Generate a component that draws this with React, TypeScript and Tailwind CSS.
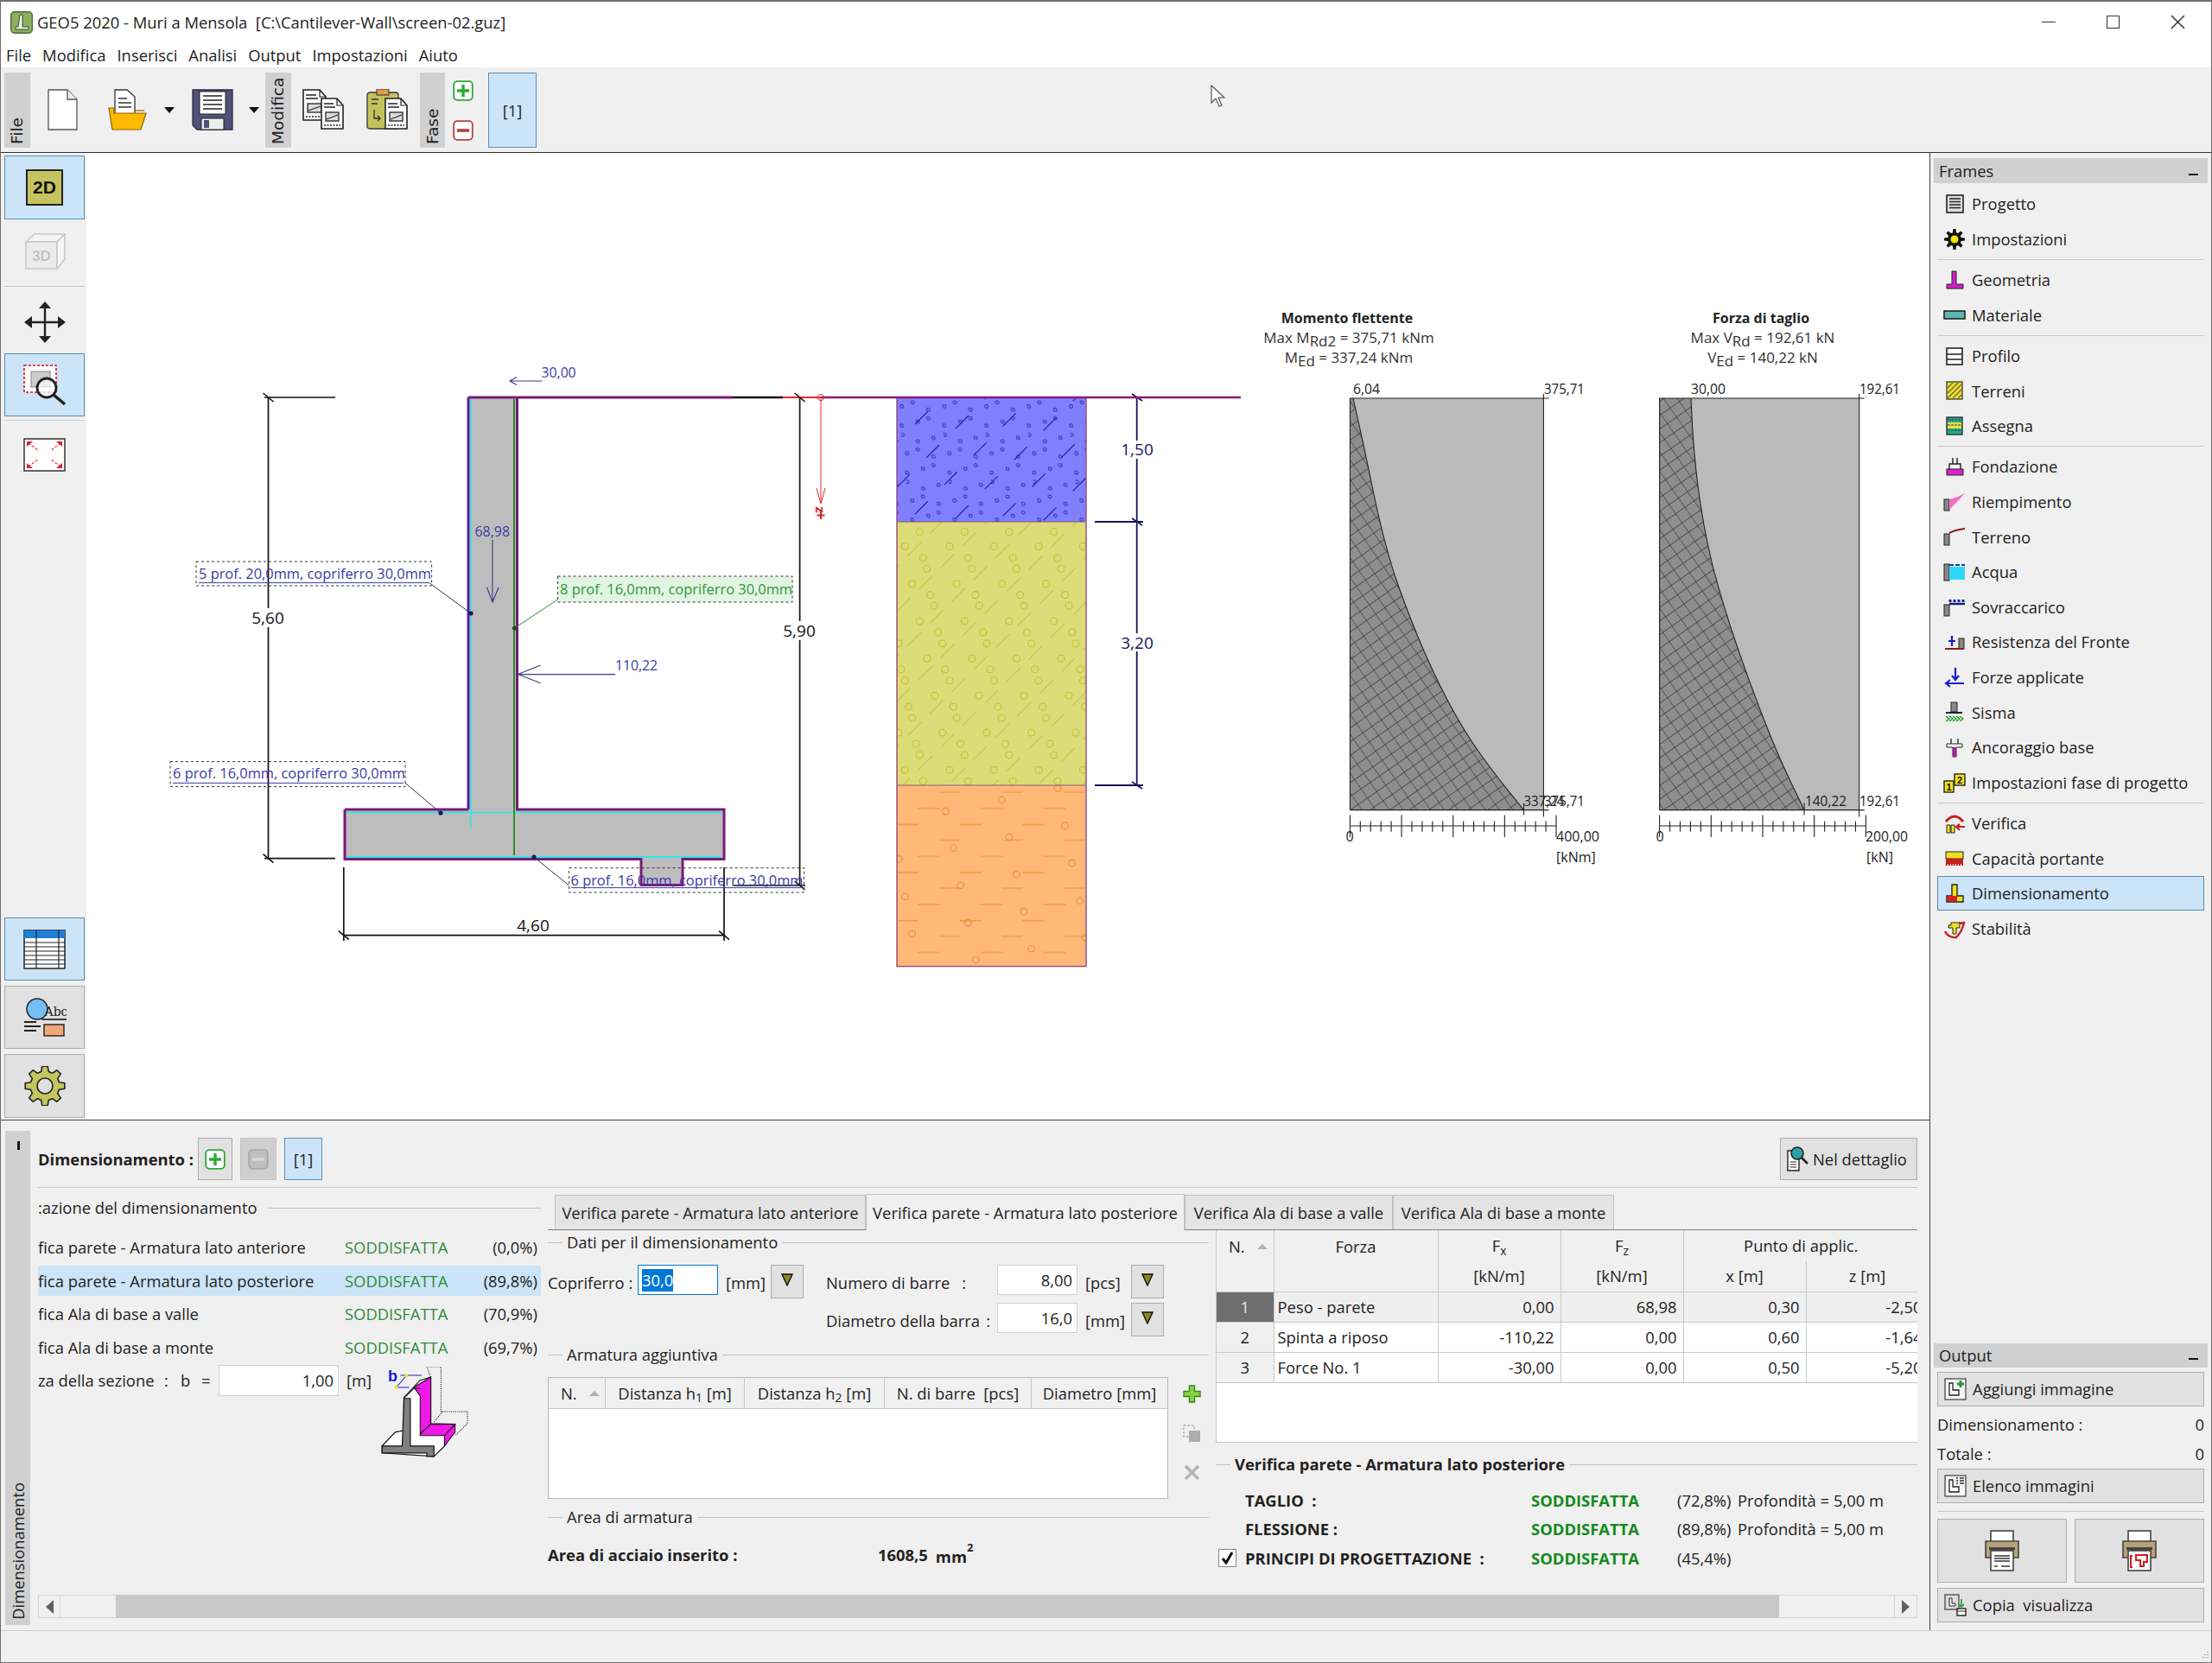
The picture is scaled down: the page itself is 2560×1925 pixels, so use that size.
import type { ReactNode } from 'react'

const btn = 'bg-[#e1e1e1] border border-[#adadad]'
const selBtn = 'bg-[#cce4f7] border border-[#5a8fb8]'
const GREEN = '#2e8b3a'
const BLUE_TXT = '#3b3ba6'
const NAVY = '#14145a'

function gearPath(cx: number, cy: number, r1: number, r2: number, n: number) {
  const pts: string[] = []
  for (let i = 0; i < n; i++) {
    const a = (i / n) * Math.PI * 2
    const s = (Math.PI / n) * 0.5
    const p = [
      [r1, a - s * 1.3],
      [r2, a - s * 0.7],
      [r2, a + s * 0.7],
      [r1, a + s * 1.3],
    ]
    p.forEach(([r, t]) => pts.push(`${(cx + r * Math.cos(t)).toFixed(1)},${(cy + r * Math.sin(t)).toFixed(1)}`))
  }
  return 'M' + pts.join('L') + 'Z'
}

function smooth(p: number[][]) {
  let d = `M${p[0][0]} ${p[0][1]}`
  for (let i = 1; i < p.length - 1; i++) {
    const mx = (p[i][0] + p[i + 1][0]) / 2
    const my = (p[i][1] + p[i + 1][1]) / 2
    d += `Q${p[i][0]} ${p[i][1]} ${mx} ${my}`
  }
  const l = p[p.length - 1]
  return d + `L${l[0]} ${l[1]}`
}

/* ---------- toolbar icons ---------- */

function MiniDoc({ x, y, w = 26, h = 40, red }: { x: number; y: number; w?: number; h?: number; red?: boolean }) {
  return (
    <g transform={`translate(${x} ${y})`}>
      <path d={`M1 1H${w - 8}L${w - 1} 9V${h - 1}H1Z`} fill="#fff" stroke="#222" strokeWidth="1.6" />
      <path d={`M${w - 8} 1V9H${w - 1}`} fill="none" stroke="#222" strokeWidth="1.2" />
      <path d={`M4 7H${w - 12}M4 11H${w - 10}`} stroke="#222" strokeWidth="1.4" />
      <rect x="6" y="17" width={w - 12} height={h - 27} fill="#ddd" stroke="#222" strokeWidth="1.3" />
      <path d={`M7 ${h - 12}L${w - 7} 20`} stroke={red ? '#c00' : '#222'} strokeWidth="1.2" />
      <path d={`M4 ${h - 5}H${w - 4}`} stroke="#222" strokeWidth="1.6" strokeDasharray="2 1.5" />
    </g>
  )
}

function NewIcon() {
  return (
    <svg width="35" height="48" viewBox="0 0 35 48">
      <path d="M1 1H23L34 12V47H1Z" fill="#fff" stroke="#555" strokeWidth="1.3" />
      <path d="M23 1V12H34" fill="#f0f0f0" stroke="#555" strokeWidth="1.3" />
    </svg>
  )
}

function OpenIcon() {
  return (
    <svg width="45" height="48" viewBox="0 0 45 48">
      <path d="M8 1H22L31 9V30H8Z" fill="#fff" stroke="#333" strokeWidth="1.3" />
      <path d="M12 11H22M12 16H27M12 21H27" stroke="#333" strokeWidth="1.4" />
      <path d="M1 22H7V28H44L38 47H5Z" fill="#ffb900" stroke="#8a6400" strokeWidth="1.2" />
      <path d="M30 25H42" stroke="#8a6400" strokeWidth="1.2" />
    </svg>
  )
}

function SaveIcon() {
  return (
    <svg width="48" height="48" viewBox="0 0 48 48">
      <path d="M1 1H47V47H6L1 42Z" fill="#51517a" stroke="#2c2c44" strokeWidth="1.3" />
      <rect x="9" y="3" width="30" height="26" fill="#fff" stroke="#222" />
      <path d="M13 8H35M13 13H35M13 18H35M13 23H35" stroke="#222" strokeWidth="1.5" />
      <rect x="11" y="34" width="26" height="13" fill="#eee" stroke="#222" />
      <rect x="14" y="36" width="6" height="9" fill="#51517a" />
    </svg>
  )
}

function CopyIcon() {
  return (
    <svg width="49" height="48" viewBox="0 0 49 48">
      <MiniDoc x={0} y={0} w={28} h={37} />
      <MiniDoc x={21} y={10} w={27} h={37} />
    </svg>
  )
}

function PasteIcon() {
  return (
    <svg width="49" height="48" viewBox="0 0 49 48">
      <rect x="1" y="4" width="36" height="42" rx="3" fill="#c4c25c" stroke="#333" strokeWidth="1.3" />
      <rect x="12" y="0" width="14" height="7" fill="#e09a50" stroke="#333" />
      <path d="M6 12H14M6 17H13M9 24V34H16M13 31L16 34L13 37" fill="none" stroke="#333" strokeWidth="1.3" />
      <MiniDoc x={21} y={10} w={27} h={37} />
    </svg>
  )
}

function Arrow({ className = '' }: { className?: string }) {
  return <span className={`w-0 h-0 border-x-[6px] border-x-transparent border-t-[7px] border-t-[#111] ${className}`} />
}

function PlusIcon({ gray }: { gray?: boolean }) {
  return (
    <svg width="24" height="24" viewBox="0 0 24 24">
      <rect x="1.2" y="1.2" width="21.6" height="21.6" rx="4" fill="#fff" stroke={gray ? '#aaa' : '#2fa83a'} strokeWidth="1.8" />
      <path d="M12 5V19M5 12H19" stroke={gray ? '#aaa' : '#2fa83a'} strokeWidth="3.4" />
    </svg>
  )
}

function MinusIcon({ gray }: { gray?: boolean }) {
  const c = gray ? '#a9a9a9' : '#b84040'
  return (
    <svg width="24" height="24" viewBox="0 0 24 24">
      <rect x="1.2" y="1.2" width="21.6" height="21.6" rx="4" fill={gray ? '#bfbfbf' : '#fff'} stroke={c} strokeWidth="1.8" />
      <path d="M5 12H19" stroke={gray ? '#d8d8d8' : c} strokeWidth="3.6" />
    </svg>
  )
}

function VertTab({ label, w }: { label: string; w: string }) {
  return (
    <div className={`${w} h-[87px] bg-[#d0d0d0] flex items-center justify-start [writing-mode:vertical-rl] rotate-180 font-['DejaVu_Sans',sans-serif] text-[18.5px] pt-[4px]`}>
      {label}
    </div>
  )
}

/* ---------- left tools ---------- */

function Icon2D() {
  return (
    <div className="w-[43px] h-[42px] bg-[#c6c45e] border-2 border-[#222] flex items-center justify-center font-['Liberation_Sans',sans-serif] font-bold text-[21px] text-[#111]">
      2D
    </div>
  )
}

function Icon3D() {
  return (
    <svg width="48" height="44" viewBox="0 0 48 44">
      <path d="M2 12L12 3H47L38 12Z" fill="#f4f4f4" stroke="#c8c8c8" strokeWidth="1.5" />
      <path d="M2 12H38V43H2Z" fill="#ececec" stroke="#c8c8c8" strokeWidth="1.5" />
      <path d="M38 12L47 3V32L38 43Z" fill="#f6f6f6" stroke="#c8c8c8" strokeWidth="1.5" />
      <text x="20" y="34" textAnchor="middle" fontSize="17" fontWeight="700" fill="#c4c4c4" fontFamily="Liberation Sans">3D</text>
    </svg>
  )
}

function MoveIcon() {
  return (
    <svg width="48" height="48" viewBox="0 0 48 48">
      <path d="M24 3V45M3 24H45" stroke="#222" strokeWidth="2.4" />
      <path d="M24 0L31 8H17ZM24 48L31 40H17ZM0 24L9 17V31ZM48 24L39 17V31Z" fill="#222" />
    </svg>
  )
}

function ZoomIcon() {
  return (
    <svg width="50" height="48" viewBox="0 0 50 48">
      <rect x="1" y="1" width="37" height="31" fill="#fff" stroke="#d01818" strokeWidth="1.6" strokeDasharray="3 2" />
      <rect x="9" y="8" width="22" height="18" fill="#ccc" stroke="#888" />
      <circle cx="27" cy="27" r="11" fill="#ffffffb0" stroke="#222" strokeWidth="2.8" />
      <path d="M35 35L48 46" stroke="#222" strokeWidth="3.6" />
    </svg>
  )
}

function FitIcon() {
  return (
    <svg width="49" height="39" viewBox="0 0 49 39">
      <rect x="1" y="1" width="47" height="37" fill="#fff" stroke="#333" strokeWidth="1.5" />
      <path d="M6 6L18 15M43 6L31 15M6 33L18 24M43 33L31 24" stroke="#e33" strokeWidth="1.3" strokeDasharray="3 2" />
      <path d="M4 4H11L4 10ZM45 4H38L45 10ZM4 35H11L4 29ZM45 35H38L45 29Z" fill="#e02020" />
    </svg>
  )
}

function TableIcon() {
  return (
    <svg width="49" height="46" viewBox="0 0 49 46">
      <rect x="1" y="1" width="47" height="44" fill="#fff" stroke="#222" strokeWidth="1.5" />
      <rect x="1" y="1" width="47" height="9" fill="#1f7fd6" />
      <path d="M1 15H48M1 20H48M1 25H48M1 30H48M1 35H48M1 40H48M15 1V45M41 1V45" stroke="#222" strokeWidth="1.2" />
    </svg>
  )
}

function AbcIcon() {
  return (
    <svg width="50" height="46" viewBox="0 0 50 46">
      <circle cx="16" cy="13" r="12" fill="#75bdf5" stroke="#222" strokeWidth="1.5" />
      <text x="38" y="21" textAnchor="middle" fontSize="14" fill="#222" fontFamily="DejaVu Serif">Abc</text>
      <path d="M21 25H50" stroke="#222" strokeWidth="1.7" />
      <path d="M1 28H15M1 33H20M1 38H15" stroke="#222" strokeWidth="1.8" />
      <rect x="24" y="31" width="23" height="13" fill="#f0a878" stroke="#222" strokeWidth="1.4" />
    </svg>
  )
}

function BigGear() {
  return (
    <svg width="50" height="46" viewBox="0 0 50 46">
      <path d={gearPath(25, 23, 17, 23, 8)} fill="#c6c45e" stroke="#222" strokeWidth="1.6" strokeLinejoin="round" />
      <circle cx="25" cy="23" r="9" fill="#e0e0e0" stroke="#222" strokeWidth="1.6" />
    </svg>
  )
}

/* ---------- frame icons ---------- */

const frameIcons: Record<string, ReactNode> = {
  Progetto: (
    <>
      <rect x="4" y="2" width="19" height="20" fill="#ddd" stroke="#222" strokeWidth="1.6" />
      <path d="M7 6H20M7 9.5H20M7 13H20M7 16.5H20" stroke="#222" strokeWidth="1.3" />
    </>
  ),
  Impostazioni: (
    <>
      <path d={gearPath(13, 12, 8, 12, 8)} fill="#111" />
      <circle cx="13" cy="12" r="5" fill="#ffe600" stroke="#111" />
    </>
  ),
  Geometria: <path d="M10 2H15V17H23V22H4V17H10Z" fill="#d020c8" stroke="#222" />,
  Materiale: <rect x="1" y="7" width="24" height="9" fill="#5ab8b0" stroke="#222" strokeWidth="1.6" />,
  Profilo: (
    <>
      <rect x="4" y="3" width="18" height="19" fill="#fff" stroke="#222" strokeWidth="1.6" />
      <path d="M4 10H22M4 16H22" stroke="#222" strokeWidth="1.4" />
    </>
  ),
  Terreni: (
    <>
      <rect x="4" y="2" width="18" height="20" fill="#f0e020" stroke="#444" strokeWidth="1.4" />
      <path d="M5 9L11 3M5 15L17 3M5 21L21 5M11 21L21 11M17 21L21 17" stroke="#665" strokeWidth="1.4" />
    </>
  ),
  Assegna: (
    <>
      <rect x="4" y="2" width="18" height="20" fill="#28a890" stroke="#333" strokeWidth="1.4" />
      <rect x="5" y="8" width="16" height="7" fill="#e8e040" />
      <path d="M5 11H21M5 17H21M5 5H21" stroke="#244" strokeWidth="1.2" strokeDasharray="3 1" />
    </>
  ),
  Fondazione: (
    <>
      <rect x="4" y="15" width="19" height="7" fill="#e020c8" stroke="#222" />
      <path d="M7 15V9H20V15M11 9V2M16 9V2" fill="none" stroke="#222" strokeWidth="1.4" />
    </>
  ),
  Riempimento: (
    <>
      <rect x="1" y="9" width="6" height="13" fill="#888" stroke="#222" />
      <path d="M7 9Q16 7 25 2Q16 12 7 21Z" fill="#f070c8" />
    </>
  ),
  Terreno: (
    <>
      <rect x="1" y="9" width="6" height="13" fill="#888" stroke="#222" />
      <path d="M7 8Q15 4 25 3" fill="none" stroke="#901818" strokeWidth="2" />
    </>
  ),
  Acqua: (
    <>
      <rect x="1" y="3" width="6" height="19" fill="#888" stroke="#222" />
      <rect x="7" y="6" width="18" height="15" fill="#30d8f8" />
      <path d="M7 4H25" stroke="#123a90" strokeWidth="2" strokeDasharray="5 2" />
    </>
  ),
  Sovraccarico: (
    <>
      <rect x="1" y="9" width="6" height="13" fill="#888" stroke="#222" />
      <path d="M7 8H25" stroke="#111a70" strokeWidth="2.4" />
      <path d="M8 6V3M13 6V3M18 6V3M23 6V3" stroke="#1620a0" strokeWidth="3" />
    </>
  ),
  'Resistenza del Fronte': (
    <>
      <rect x="18" y="8" width="6" height="12" fill="#888" stroke="#222" />
      <path d="M2 20H24" stroke="#901818" strokeWidth="2" />
      <path d="M10 5V17M6 11H14" stroke="#1620c0" strokeWidth="2.2" />
    </>
  ),
  'Forze applicate': (
    <>
      <path d="M14 1V13M10 10L14 15L18 10" fill="none" stroke="#1620d0" strokeWidth="2.2" />
      <path d="M3 19H24M8 15L3 19L8 23" fill="none" stroke="#1620d0" strokeWidth="2.2" />
    </>
  ),
  Sisma: (
    <>
      <rect x="9" y="1" width="7" height="11" fill="#888" stroke="#222" />
      <path d="M3 13H22" stroke="#222" strokeWidth="2" />
      <path d="M3 17L7 20L3 23M11 17L15 20L11 23M19 17L23 20L19 23M7 17L11 20L7 23M15 17L19 20L15 23" fill="none" stroke="#18a020" strokeWidth="1.4" />
    </>
  ),
  'Ancoraggio base': (
    <>
      <path d="M4 8H22V12H15V23H11V12H4Z" fill="#fff" stroke="#222" />
      <rect x="11" y="12" width="4" height="11" fill="#a82090" />
      <path d="M9 8V2M17 8V2" stroke="#222" strokeWidth="1.3" />
    </>
  ),
  'Impostazioni fase di progetto': (
    <>
      <rect x="1" y="10" width="11" height="13" fill="#f0e020" stroke="#222" strokeWidth="1.4" />
      <rect x="13" y="2" width="12" height="13" fill="#f0e020" stroke="#222" strokeWidth="1.4" />
      <text x="6.5" y="21" textAnchor="middle" fontSize="11" fontWeight="700" fill="#111" fontFamily="Liberation Sans">1</text>
      <text x="19" y="13" textAnchor="middle" fontSize="11" fontWeight="700" fill="#111" fontFamily="Liberation Sans">2</text>
    </>
  ),
  Verifica: (
    <>
      <path d="M3 10Q13 -2 23 10" fill="none" stroke="#c02020" strokeWidth="3" />
      <path d="M4 14H8V23H4ZM9 14H13V23H9Z" fill="#f0e020" stroke="#222" />
      <path d="M15 16H25M19 13L15 16L19 20" fill="none" stroke="#c02020" strokeWidth="2.2" />
    </>
  ),
  'Capacità portante': (
    <>
      <rect x="3" y="5" width="20" height="8" fill="#f0e020" stroke="#222" />
      <rect x="3" y="13" width="20" height="6" fill="#c82020" />
      <path d="M3 20H23" stroke="#c82020" strokeWidth="2" strokeDasharray="2 1" />
    </>
  ),
  Dimensionamento: (
    <>
      <path d="M10 2H16V15H23V22H4V15H10Z" fill="#f0e020" stroke="#222" strokeWidth="1.4" />
      <rect x="5" y="15" width="11" height="6" fill="#e02020" />
    </>
  ),
  Stabilità: (
    <>
      <path d="M2 15Q6 23 15 22Q22 15 24 5L18 6" fill="none" stroke="#c82020" strokeWidth="2.4" />
      <path d="M9 5H19V11H15V18H11V11H6V8H9Z" fill="#f0e020" stroke="#222" />
    </>
  ),
}

const frameGroups = [
  ['Progetto', 'Impostazioni'],
  ['Geometria', 'Materiale'],
  ['Profilo', 'Terreni', 'Assegna'],
  [
    'Fondazione',
    'Riempimento',
    'Terreno',
    'Acqua',
    'Sovraccarico',
    'Resistenza del Fronte',
    'Forze applicate',
    'Sisma',
    'Ancoraggio base',
    'Impostazioni fase di progetto',
  ],
  ['Verifica', 'Capacità portante', 'Dimensionamento', 'Stabilità'],
]

function PanelHead({ label, h }: { label: string; h: string }) {
  return (
    <div className={`${h} mx-[4px] bg-[#d0d0d0] flex items-center justify-between pl-[6px] pr-[11px]`}>
      <span>{label}</span>
      <span className="w-[11px] h-[2px] bg-[#111] mt-[8px]" />
    </div>
  )
}

function OutputBtn({ label, children }: { label: string; children: ReactNode }) {
  return (
    <div className={`h-[40px] mx-[8px] ${btn} flex items-center pl-[7px]`}>
      <svg width="26" height="26" viewBox="0 0 26 26">
        {children}
      </svg>
      <span className="ml-[7px] whitespace-pre">{label}</span>
    </div>
  )
}

function Printer({ red }: { red?: boolean }) {
  return (
    <svg width="40" height="48" viewBox="0 0 40 48">
      <rect x="7" y="1" width="26" height="13" fill="#fff" stroke="#444" strokeWidth="1.6" />
      <path d="M1 13H39V32H31V24H9V32H1Z" fill="#b8a278" stroke="#444" strokeWidth="1.6" />
      <rect x="5" y="20" width="30" height="3" fill="#444" />
      <rect x="7" y="24" width="26" height="23" fill="#fff" stroke="#444" strokeWidth="1.6" />
      {red ? (
        <path d="M12 30H10V43H12M16 29H29V37H25V42H21V35H16Z" fill="none" stroke="#d81818" strokeWidth="2" />
      ) : (
        <path d="M11 30H29M11 33H29M11 36H29M11 42H15M19 42H29" stroke="#333" strokeWidth="1.4" />
      )}
    </svg>
  )
}

function RightPanel() {
  return (
    <div className="w-[326px] border-l border-[#444] flex flex-col pt-[6px] pb-[9px] bg-[#f0f0f0]">
      <PanelHead label="Frames" h="h-[29px]" />
      <div className="mt-[4px]">
        {frameGroups.map((g, gi) => (
          <div key={gi}>
            {gi > 0 && <div className="h-px bg-[#c8c8c8] mx-[8px] my-[2.8px]" />}
            {g.map((name) => (
              <div
                key={name}
                className={`h-[40.6px] mx-[8px] flex items-center pl-[6px] border ${name === 'Dimensionamento' ? 'bg-[#cce4f7] border-[#5a8fb8]' : 'border-transparent'}`}
              >
                <svg width="26" height="24" viewBox="0 0 26 24">
                  {frameIcons[name]}
                </svg>
                <span className="ml-[7px]">{name}</span>
              </div>
            ))}
          </div>
        ))}
      </div>
      <div className="mt-auto">
        <PanelHead label="Output" h="h-[28px]" />
        <div className="h-[5px]" />
        <OutputBtn label="Aggiungi immagine">
          <rect x="1" y="1" width="24" height="24" fill="#f4f4f4" stroke="#555" strokeWidth="1.4" />
          <path d="M6 6H10V14H17V20H6Z" fill="#fff" stroke="#222" strokeWidth="1.3" />
          <path d="M19 3V11M15 7H23" stroke="#1c9a28" strokeWidth="2.8" />
        </OutputBtn>
        <div className="mx-[8px] mt-[4px] h-[34px] flex items-center justify-between">
          <span>Dimensionamento :</span>
          <span>0</span>
        </div>
        <div className="mx-[8px] h-[34px] flex items-center justify-between">
          <span>Totale :</span>
          <span>0</span>
        </div>
        <OutputBtn label="Elenco immagini">
          <rect x="1" y="1" width="24" height="24" fill="#f4f4f4" stroke="#555" strokeWidth="1.4" />
          <path d="M6 6H10V14H17V20H6Z" fill="#fff" stroke="#222" strokeWidth="1.3" />
          <path d="M14 4H16M18 4H23M14 7H16M18 7H23M14 10H16M18 10H23" stroke="#333" strokeWidth="1.4" />
        </OutputBtn>
        <div className="h-px bg-[#c8c8c8] mx-[8px] mt-[9px] mb-[8px]" />
        <div className="mx-[8px] flex justify-between">
          <div className={`w-[150px] h-[74px] ${btn} flex items-center justify-center`}>
            <Printer />
          </div>
          <div className={`w-[150px] h-[74px] ${btn} flex items-center justify-center`}>
            <Printer red />
          </div>
        </div>
        <div className="h-[6px]" />
        <OutputBtn label="Copia  visualizza">
          <rect x="1" y="1" width="16" height="17" fill="#ddd" stroke="#555" strokeWidth="1.4" />
          <path d="M6 5H9V11H13V14H6Z" fill="#fff" stroke="#222" />
          <path d="M20 6V15M17 12L20 15L23 12" fill="none" stroke="#1c9a28" strokeWidth="1.6" />
          <rect x="15" y="17" width="10" height="8" fill="#fff" stroke="#222" strokeWidth="1.4" />
          <path d="M15 20H25" stroke="#222" />
        </OutputBtn>
      </div>
    </div>
  )
}

/* ---------- drawing ---------- */

function Tick({ x, y }: { x: number; y: number }) {
  return <path d={`M${x - 6} ${y - 5}L${x + 6} ${y + 5}`} stroke="#111" strokeWidth="1.6" />
}

type TProps = { x: number; y: number; w?: number; s?: number; fill?: string; a?: 'start' | 'middle' | 'end'; b?: boolean; children: ReactNode }

function T({ x, y, w, s = 16, fill = '#222', a = 'start', b, children }: TProps) {
  return (
    <text
      x={x}
      y={y}
      fontSize={s}
      fill={fill}
      textAnchor={a}
      fontWeight={b ? 700 : 400}
      dominantBaseline="central"
      {...(w ? { textLength: w, lengthAdjust: 'spacingAndGlyphs' as const } : {})}
    >
      {children}
    </text>
  )
}

function Callout({ box, text, tx, ty, line, dot, ul, green }: { box: number[]; text: string; tx: number; ty: number; line: number[]; dot: number[]; ul?: number[]; green?: boolean }) {
  const c = green ? '#2e9a3c' : BLUE_TXT
  return (
    <g>
      <rect x={box[0]} y={box[1]} width={box[2] - box[0]} height={box[3] - box[1]} fill={green ? '#e2f4e2' : 'none'} stroke="#333" strokeDasharray="3 3" />
      <T x={tx} y={ty} w={269} fill={c}>
        {text}
      </T>
      {ul && <path d={`M${ul[0]} ${ul[2]}H${ul[1]}`} stroke={c} />}
      <path d={`M${line[0]} ${line[1]}L${line[2]} ${line[3]}`} stroke={green ? '#2e8b3a' : '#334'} />
      <circle cx={dot[0]} cy={dot[1]} r="2.6" fill={green ? '#1c4a24' : '#14145a'} />
    </g>
  )
}

function Wall() {
  return (
    <g>
      <path d="M542 460H598.5V937H838V994.5H790V1024.5H742V994.5H399V937H542Z" fill="#bdbdbd" />
      <path d="M544.6 462V958M401 940.4H835M401 992H835" stroke="#2ee6e6" strokeWidth="1.8" fill="none" />
      <path d="M595 462V990" stroke="#1f8a1f" strokeWidth="1.8" />
      <path d="M542 937V460" stroke="#5a1fa0" strokeWidth="3" />
      <path d="M399 937H542M598.5 460V937H838V994.5H790V1024.5H742V994.5H399V937" stroke="#7a1a78" strokeWidth="3" fill="none" />
      <path d="M542 460H848" stroke="#7a1a78" strokeWidth="3" />
      <path d="M848 460H906" stroke="#111" strokeWidth="2.4" />
      <path d="M906 460H950" stroke="#e02a2a" strokeWidth="2" />
      <path d="M950 460H1436" stroke="#8c1a7a" strokeWidth="2.4" />

      {/* dimensions */}
      <path d="M310.5 460V993.7M306 460H388M306 993.7H388" stroke="#111" strokeWidth="1.7" fill="none" />
      <Tick x={310.5} y={460} />
      <Tick x={310.5} y={993.7} />
      <rect x="293" y="704" width="36" height="22" fill="#fff" />
      <T x={310} y={715} s={19} a="middle" fill="#111">5,60</T>

      <path d="M925.6 460V1025M848.6 1025H932" stroke="#111" strokeWidth="1.7" fill="none" />
      <Tick x={925.6} y={460} />
      <Tick x={925.6} y={1025} />
      <rect x="908" y="719" width="36" height="22" fill="#fff" />
      <T x={925} y={730} s={19} a="middle" fill="#111">5,90</T>

      <path d="M397.8 1004V1089M838 1004V1089M397.8 1082.7H838" stroke="#111" strokeWidth="1.7" fill="none" />
      <Tick x={397.8} y={1082.7} />
      <Tick x={838} y={1082.7} />
      <T x={617} y={1071} s={19} a="middle" fill="#111">4,60</T>

      {/* forces */}
      <T x={626.6} y={431} w={40} fill={BLUE_TXT}>30,00</T>
      <path d="M627.5 441H590M598 436.5L590 441L598 445.5" stroke="#3a3a88" strokeWidth="1.1" fill="none" />
      <T x={549.5} y={614.5} w={40.5} fill={BLUE_TXT}>68,98</T>
      <path d="M570 625V697M563.5 680L570 697L577 680" stroke="#3a3a88" strokeWidth="1.1" fill="none" />
      <T x={712} y={770} w={49} fill={BLUE_TXT}>110,22</T>
      <path d="M712 780.6H599.5M625.6 770L599.5 780.6L625.6 790.7" stroke="#3a3a88" strokeWidth="1.1" fill="none" />

      <Callout box={[227, 650, 499.6, 678]} text="5 prof. 20,0mm, copriferro 30,0mm" tx={230} ty={664} ul={[230, 496.6, 674.6]} line={[496.6, 674.6, 545, 710]} dot={[545, 710]} />
      <Callout box={[645.5, 667, 917, 697]} text="8 prof. 16,0mm, copriferro 30,0mm" tx={648} ty={682} line={[645.5, 694, 595.5, 727]} dot={[595.5, 727]} green />
      <Callout box={[197, 881.6, 469, 910.6]} text="6 prof. 16,0mm, copriferro 30,0mm" tx={200} ty={895} ul={[200, 467, 906.4]} line={[469, 906.4, 510, 941]} dot={[510, 941]} />
      <Callout box={[658.6, 1004.7, 930.5, 1033]} text="6 prof. 16,0mm, copriferro 30,0mm" tx={660.5} ty={1019} ul={[660.5, 927, 1027.6]} line={[658.6, 1025, 618, 992]} dot={[618, 992]} />

      {/* z axis */}
      <circle cx="950" cy="460" r="3.6" fill="none" stroke="#e02a2a" />
      <path d="M950 460V582M945 565L950 583L955 565" stroke="#e02a2a" fill="none" />
      <text x="950" y="590" fontSize="15" fontWeight="700" fill="#e02020" textAnchor="middle" dominantBaseline="central" transform="rotate(90 950 590)">z</text>
      <path d="M950 592V601M945.5 596.5H954.5" stroke="#e02020" strokeWidth="2" />
    </g>
  )
}

// circle rows read off the reference, as [y, ...x] in soil-column coordinates
const yellowRows = [
  [393, 313, 469, 624, 779], [431, 262, 417, 571, 726, 880], [461, 325, 481, 636, 792], [489, 338, 494, 649, 804],
  [528, 287, 441, 598, 752], [557, 350, 507, 662, 818], [585, 363, 520, 675, 831], [625, 313, 469, 624, 779],
  [654, 377, 533, 686, 843], [683, 240, 392, 546, 701, 855], [722, 339, 494, 649, 804], [750, 248, 402, 558, 713, 870],
  [779, 262, 417, 571, 726, 880], [818, 365, 519, 675, 831], [847, 274, 430, 585, 740, 888], [876, 287, 441, 598, 752],
  [914, 240, 392, 546, 701, 855], [943, 300, 455, 610, 765], [972, 313, 469, 624, 779], [1011, 262, 417, 571, 726, 880],
  [1040, 325, 481, 636, 792],
]

const orangeDots = [
  [792, 1058], [598, 1088], [403, 1118], [817, 1155], [624, 1185], [430, 1213], [240, 1242], [842, 1252], [649, 1281],
  [455, 1310], [262, 1339], [870, 1350], [675, 1378], [481, 1407], [287, 1436], [888, 1445], [701, 1474], [508, 1503],
]

const zx = (x: number) => 960 + x / 3
const zy = (y: number) => 440 + y / 2.24

function DiagDashes({ x, y, w, h, gap, dash, color, sw }: { x: number; y: number; w: number; h: number; gap: number; dash: string; color: string; sw: number }) {
  const lines: number[] = []
  for (let c = y; c < y + h + w; c += gap) lines.push(c)
  return (
    <path
      d={lines.map((c, i) => `M${x - (i % 2) * 13} ${c + (i % 2) * 13}L${x + w} ${c - w}`).join('')}
      stroke={color}
      strokeWidth={sw}
      strokeDasharray={dash}
      fill="none"
    />
  )
}

function SoilDefs() {
  return (
    <defs>
      <clipPath id="clipBlue"><rect x="1038" y="460" width="219" height="144" /></clipPath>
      <clipPath id="clipYellow"><rect x="1038" y="604" width="219" height="305" /></clipPath>
      <clipPath id="clipOrange"><rect x="1038" y="909" width="219" height="209.6" /></clipPath>
      <pattern id="soilBlue" width="49" height="54.5" patternUnits="userSpaceOnUse" patternTransform="translate(1038 460) skewX(6.28)">
        <g fill="none" stroke="#2828c0" strokeWidth="1">
          <circle cx="4.6" cy="10.3" r="1.9" />
          <circle cx="17.4" cy="5.8" r="1.9" />
          <circle cx="34.7" cy="14.3" r="1.9" />
          <circle cx="2.1" cy="32.6" r="1.9" />
          <circle cx="21.2" cy="28.1" r="1.9" />
          <circle cx="33.6" cy="24.1" r="1.9" />
          <circle cx="1.5" cy="43.3" r="1.9" />
          <circle cx="18.7" cy="50.9" r="1.9" />
          <circle cx="37.1" cy="46.9" r="1.9" />
        </g>
      </pattern>
      <pattern id="soilDash" width="72.7" height="55.6" patternUnits="userSpaceOnUse" patternTransform="translate(1038 909)">
        <path d="M48.7 8H72.7M23.7 26.8H50M0 45.5H25" stroke="#e8903c" strokeWidth="1.1" />
      </pattern>
      <pattern id="hatch" width="13" height="13" patternUnits="userSpaceOnUse" patternTransform="rotate(55)">
        <path d="M0 0H13M0 0V13" stroke="#262626" strokeWidth="1.2" />
      </pattern>
    </defs>
  )
}

function Soil() {
  return (
    <g>
      <rect x="1038" y="460" width="219" height="144" fill="#8080ff" />
      <rect x="1038" y="460" width="219" height="144" fill="url(#soilBlue)" />
      <g clipPath="url(#clipBlue)">
        <DiagDashes x={1038} y={460} w={219} h={144} gap={52} dash="21 27" color="#2020b0" sw={1.2} />
      </g>
      <rect x="1038" y="604" width="219" height="305" fill="#dcdc78" />
      <g clipPath="url(#clipYellow)">
        <DiagDashes x={1038} y={604} w={219} h={305} gap={52} dash="22 14" color="#c6c650" sw={1.2} />
        {yellowRows.map(([y, ...xs]) =>
          xs.map((x) => <circle key={`${x}-${y}`} cx={zx(x)} cy={zy(y)} r="4" fill="none" stroke="#c8c030" strokeWidth="1.1" />),
        )}
      </g>
      <rect x="1038" y="909" width="219" height="209.6" fill="#ffb878" />
      <rect x="1038" y="909" width="219" height="209.6" fill="url(#soilDash)" />
      <g clipPath="url(#clipOrange)">
        {orangeDots.map(([x, y]) => (
          <circle key={`${x}-${y}`} cx={zx(x)} cy={zy(y)} r="3.8" fill="none" stroke="#e8903c" strokeWidth="1.1" />
        ))}
      </g>
      <rect x="1038" y="460" width="219" height="658.6" fill="none" stroke="#9a4878" strokeWidth="1.4" />
      <path d="M1038 604H1257M1038 909H1257" stroke="#8a5a70" strokeWidth="1.2" />
      <path d="M1267 460H1316M1267 604H1323M1267 909H1323M1315.7 460V909" stroke={NAVY} strokeWidth="1.8" fill="none" />
      <path d="M1310 456L1322 464M1310 600L1322 608M1310 905L1322 913" stroke={NAVY} strokeWidth="1.6" />
      <rect x="1298" y="510" width="36" height="21" fill="#fff" />
      <T x={1316} y={520} s={19} a="middle" fill={NAVY}>1,50</T>
      <rect x="1298" y="733" width="36" height="21" fill="#fff" />
      <T x={1316} y={743.5} s={19} a="middle" fill={NAVY}>3,20</T>
    </g>
  )
}

type ChartProps = { x0: number; x1: number; scaleEnd: number; curve: number[][] }

function Chart({ x0, x1, scaleEnd, curve }: ChartProps) {
  const top = 461
  const bot = 937.6
  const line = smooth(curve)
  const fill = `${line}L${x0} ${bot}L${x0} ${top}L${curve[0][0]} ${top}Z`
  const step = (scaleEnd - x0) / 4
  const big = [0, 1, 2, 3, 4].map((i) => x0 + i * step)
  const small: number[] = []
  big.slice(0, 4).forEach((b) => [1, 2, 3, 4].forEach((k) => small.push(b + (k * step) / 5)))
  return (
    <g>
      <rect x={x0} y={top} width={x1 - x0} height={bot - top} fill="#bababa" />
      <path d={fill} fill="#8e8e8e" />
      <path d={fill} fill="url(#hatch)" />
      <path d={line} fill="none" stroke="#222" strokeWidth="1.1" />
      <path d={`M${x0} ${top}H${x1 + 6}M${x0} ${bot}H${x1 + 6}M${x0} ${top}V${bot}M${x1} ${top - 5}V${bot + 8}M${curve[curve.length - 1][0]} ${bot - 8}V${bot + 6}`} stroke="#222" strokeWidth="1.1" fill="none" />
      <path d={`M${x0} 956H${scaleEnd}`} stroke="#222" strokeWidth="1.1" />
      {big.map((b) => (
        <path key={b} d={`M${b} 943.6V969`} stroke="#222" strokeWidth="1.1" />
      ))}
      {small.map((b) => (
        <path key={b} d={`M${b} 950.6V962.7`} stroke="#222" strokeWidth="1.1" />
      ))}
    </g>
  )
}

function Drawing() {
  return (
    <svg width="2133" height="1119" viewBox="100 177 2133 1119" className="font-['Open_Sans',sans-serif] block">
      <SoilDefs />
      <Soil />
      <Wall />

      <T x={1559} y={368} s={16} b a="middle">Momento flettente</T>
      <text x={1561} y={397} fontSize="17" textAnchor="middle" fill="#333">
        Max M<tspan dy="4">Rd2</tspan><tspan dy="-4"> = 375,71 kNm</tspan>
      </text>
      <text x={1561} y={420} fontSize="17" textAnchor="middle" fill="#333">
        M<tspan dy="4">Ed</tspan><tspan dy="-4"> = 337,24 kNm</tspan>
      </text>
      <T x={2038} y={368} s={16} b a="middle">Forza di taglio</T>
      <text x={2040} y={397} fontSize="17" textAnchor="middle" fill="#333">
        Max V<tspan dy="4">Rd</tspan><tspan dy="-4"> = 192,61 kN</tspan>
      </text>
      <text x={2040} y={420} fontSize="17" textAnchor="middle" fill="#333">
        V<tspan dy="4">Ed</tspan><tspan dy="-4"> = 140,22 kN</tspan>
      </text>

      <Chart
        x0={1562.4}
        x1={1786.4}
        scaleEnd={1801}
        curve={[[1566, 461], [1575, 500], [1603, 635], [1634, 722], [1664.5, 791], [1695, 847], [1726, 891], [1763.5, 937.6]]}
      />
      <Chart
        x0={1920.6}
        x1={2151.7}
        scaleEnd={2159.4}
        curve={[[1957, 461], [1959.4, 526.5], [1975.7, 635], [2001, 721.6], [2026.7, 795], [2057, 873], [2088, 937.6]]}
      />

      <T x={1566} y={450} s={16} w={31}>6,04</T>
      <T x={1787} y={450} s={16} w={47}>375,71</T>
      <T x={1763.5} y={926.5} s={16} w={47}>337,24</T>
      <T x={1787} y={926.5} s={16} w={47}>375,71</T>
      <T x={1562} y={968} s={16} a="middle">0</T>
      <T x={1801} y={968} s={16} w={50}>400,00</T>
      <T x={1801} y={992} s={16}>[kNm]</T>

      <T x={1957} y={450} s={16} w={40}>30,00</T>
      <T x={2152} y={450} s={16} w={47}>192,61</T>
      <T x={2089} y={926.5} s={16} w={48}>140,22</T>
      <T x={2152} y={926.5} s={16} w={47}>192,61</T>
      <T x={1921} y={968} s={16} a="middle">0</T>
      <T x={2159} y={968} s={16} w={49}>200,00</T>
      <T x={2160} y={992} s={16}>[kN]</T>
    </svg>
  )
}

/* ---------- bottom panel ---------- */

function Section({ label, bold, className = '' }: { label: string; bold?: boolean; className?: string }) {
  return (
    <div className={`h-[28px] flex items-center ${className}`}>
      <span className="w-[17px] h-px bg-[#c0c0c0] shrink-0" />
      <span className={`px-[5px] whitespace-nowrap ${bold ? 'font-bold' : ''}`}>{label}</span>
      <span className="flex-1 h-px bg-[#c0c0c0]" />
    </div>
  )
}

function DownBtn() {
  return (
    <div className={`w-[38px] h-[39px] ${btn} flex items-center justify-center pb-[4px]`}>
      <svg width="14" height="15" viewBox="0 0 14 15">
        <path d="M1 1H13L7 14Z" fill="#8a8a18" stroke="#111" strokeWidth="1.4" />
      </svg>
    </div>
  )
}

function Field({ value, width = 'w-[93px]' }: { value: string; width?: string }) {
  return <div className={`${width} h-[35px] bg-white border border-[#d0d0d0] flex items-center justify-end pr-[5px]`}>{value}</div>
}

const checks: [string, string][] = [
  ['fica parete - Armatura lato anteriore', '(0,0%)'],
  ['fica parete - Armatura lato posteriore', '(89,8%)'],
  ['fica Ala di base a valle', '(70,9%)'],
  ['fica Ala di base a monte', '(69,7%)'],
]

function WallSketch() {
  return (
    <svg width="102" height="105" viewBox="1075 705 250 263" preserveAspectRatio="none" className="ml-[11px] mt-[2px] shrink-0">
      <path d="M1140 795L1185 745L1216 735L1216 870L1285 872L1255 935L1225 965L1078 955L1078 935L1115 895L1140 890Z" fill="#fff" stroke="#111" strokeWidth="3" />
      <path d="M1168 765L1216 735V872L1186 900V790Z" fill="#f018e8" stroke="#111" strokeWidth="2.5" />
      <path d="M1186 900L1216 872H1285L1255 905H1186Z" fill="#f018e8" stroke="#111" strokeWidth="2.5" />
      <path d="M1255 905L1285 872V895L1255 935Z" fill="#f018e8" stroke="#111" strokeWidth="2.5" />
      <path d="M1140 797H1158V935H1225V965H1205V955H1078V935H1135Z" fill="#808080" stroke="#111" strokeWidth="3" />
      <path d="M1140 797L1168 768H1186" fill="none" stroke="#111" strokeWidth="2.5" />
      <path d="M1205 705H1245V835H1320V870L1285 905M1216 735L1205 705M1225 865L1250 835" fill="none" stroke="#222" strokeWidth="2.5" strokeDasharray="3 3" />
      <path d="M1130 730H1190M1115 765H1155M1118 765L1148 730" fill="none" stroke="#1818d8" strokeWidth="2.5" />
      <circle cx="1147" cy="731" r="5" fill="#ffe600" />
      <circle cx="1118" cy="764" r="5" fill="#ffe600" />
      <text x="1108" y="748" fontSize="44" fontWeight="700" fill="#1818d8" textAnchor="middle" fontFamily="Liberation Sans">b</text>
    </svg>
  )
}

function LeftCol() {
  return (
    <div className="w-[582px] shrink-0">
      <div className="h-[46px] flex items-center">
        <span className="whitespace-nowrap">:azione del dimensionamento</span>
        <span className="ml-[12px] flex-1 h-px bg-[#c0c0c0]" />
      </div>
      <div className="mt-[5.5px] flex flex-col gap-[3.5px]">
        {checks.map(([label, pct], i) => (
          <div key={label} className={`h-[35px] flex items-center ${i === 1 ? 'bg-[#cce4f7]' : ''}`}>
            <span className="w-[355px] whitespace-nowrap">{label}</span>
            <span className="w-[130px]" style={{ color: GREEN }}>SODDISFATTA</span>
            <span className="w-[93px] text-right">{pct}</span>
          </div>
        ))}
      </div>
      <div className="mt-[3px] flex items-start">
        <span className="h-[36px] flex items-center w-[146px] whitespace-nowrap">za della sezione</span>
        <span className="h-[36px] flex items-center w-[19px]">:</span>
        <span className="h-[36px] flex items-center w-[24px]">b</span>
        <span className="h-[36px] flex items-center w-[20px]">=</span>
        <div className="w-[139px] h-[36px] bg-white border border-[#d0d0d0] flex items-center justify-end pr-[5px]">1,00</div>
        <span className="h-[36px] flex items-center ml-[9px]">[m]</span>
        <WallSketch />
      </div>
    </div>
  )
}

const tabs = ['Verifica parete - Armatura lato anteriore', 'Verifica parete - Armatura lato posteriore', 'Verifica Ala di base a valle', 'Verifica Ala di base a monte']
const tabWidths = ['w-[360px]', 'w-[369px]', 'w-[241px]', 'w-[256px]']

function MidCol() {
  return (
    <div className="w-[765px] shrink-0">
      <Section label="Dati per il dimensionamento" />
      <div className="mt-[12px] flex items-start">
        <div className="w-[322px] flex items-start">
          <span className="w-[104px] h-[42px] flex items-center">Copriferro :</span>
          <div className="w-[93px] h-[35px] bg-white border border-[#0078d7] flex items-center pl-[4px]">
            <span className="bg-[#0078d7] text-white leading-[26px]">30,0</span>
          </div>
          <span className="w-[61px] h-[42px] flex items-center pl-[9px]">[mm]</span>
          <DownBtn />
        </div>
        <div className="flex flex-col gap-[5px]">
          <div className="flex items-start h-[39px]">
            <span className="w-[198px] h-[42px] flex items-center justify-between pr-[8px]">
              <span>Numero di barre</span>
              <span className="mr-[28px]">:</span>
            </span>
            <Field value="8,00" />
            <span className="w-[62px] h-[42px] flex items-center pl-[9px]">[pcs]</span>
            <DownBtn />
          </div>
          <div className="flex items-start h-[39px]">
            <span className="w-[198px] h-[42px] flex items-center justify-between pr-[8px]">
              <span>Diametro della barra</span>
              <span>:</span>
            </span>
            <Field value="16,0" />
            <span className="w-[62px] h-[42px] flex items-center pl-[9px]">[mm]</span>
            <DownBtn />
          </div>
        </div>
      </div>
      <Section label="Armatura aggiuntiva" className="mt-[7px]" />
      <div className="mt-[12px] flex">
        <div className="w-[718px] h-[141px] bg-white border border-[#b8b8b8]">
          <div className="h-[36px] bg-[#f0f0f0] border-b border-[#c8c8c8] grid grid-cols-[66px_161px_162px_170px_1fr]">
            <div className="border-r border-[#c8c8c8] flex items-center pl-[14px] gap-[14px]">
              N.
              <span className="w-0 h-0 border-x-[6px] border-x-transparent border-b-[6px] border-b-[#b0b0b0]" />
            </div>
            <div className="border-r border-[#c8c8c8] flex items-center justify-center">
              <span>Distanza h<sub>1</sub> [m]</span>
            </div>
            <div className="border-r border-[#c8c8c8] flex items-center justify-center">
              <span>Distanza h<sub>2</sub> [m]</span>
            </div>
            <div className="border-r border-[#c8c8c8] flex items-center justify-center whitespace-pre">N. di barre  [pcs]</div>
            <div className="flex items-center justify-center">Diametro [mm]</div>
          </div>
        </div>
        <div className="w-[47px] flex flex-col items-center pl-[7px] pt-[9px] gap-[25px]">
          <svg width="21" height="21" viewBox="0 0 21 21">
            <path d="M7.5 1H13.5V7.5H20V13.5H13.5V20H7.5V13.5H1V7.5H7.5Z" fill="#8cd048" stroke="#2c8c1c" strokeWidth="1.4" />
          </svg>
          <svg width="21" height="21" viewBox="0 0 21 21">
            <rect x="1" y="1" width="12" height="13" fill="none" stroke="#aaa" strokeWidth="1.4" strokeDasharray="2.5 2" />
            <rect x="7" y="7" width="13" height="13" fill="#adadad" />
          </svg>
          <svg width="19" height="19" viewBox="0 0 19 19">
            <path d="M2 2L17 17M17 2L2 17" stroke="#b4b4b4" strokeWidth="3.4" />
          </svg>
        </div>
      </div>
      <Section label="Area di armatura" className="mt-[7px]" />
      <div className="mt-[15px] h-[30px] flex items-center font-bold">
        <span className="w-[382px]">Area di acciaio inserito :</span>
        <span>1608,5</span>
        <span className="ml-[9px] mt-[4px]">mm</span>
        <sup className="-mt-[6px] text-[13px]">2</sup>
      </div>
    </div>
  )
}

const forceRows = [
  ['1', 'Peso - parete', '0,00', '68,98', '0,30', '-2,50'],
  ['2', 'Spinta a riposo', '-110,22', '0,00', '0,60', '-1,64'],
  ['3', 'Force No. 1', '-30,00', '0,00', '0,50', '-5,20'],
]

function RightCol() {
  const th = 'border-r border-[#c8c8c8] font-normal align-middle'
  const td = 'border-r border-b border-[#c8c8c8] px-[7px] text-right'
  return (
    <div className="w-[812px] shrink-0">
      <div className="h-[246px] bg-white border-l border-b border-[#c8c8c8] overflow-hidden">
        <table className="table-fixed border-collapse w-[824px]">
          <colgroup>
            <col className="w-[66px]" />
            <col className="w-[190px]" />
            <col className="w-[142px]" />
            <col className="w-[142px]" />
            <col className="w-[142px]" />
            <col className="w-[142px]" />
          </colgroup>
          <thead className="bg-[#f0f0f0]">
            <tr className="h-[36px]">
              <th rowSpan={2} className={`${th} border-b align-top pt-[5px] text-left pl-[14px]`}>
                <span className="flex items-center gap-[14px]">
                  N.
                  <span className="w-0 h-0 border-x-[6px] border-x-transparent border-b-[6px] border-b-[#b0b0b0]" />
                </span>
              </th>
              <th rowSpan={2} className={`${th} border-b align-top pt-[5px]`}>Forza</th>
              <th className={th}>F<sub>x</sub></th>
              <th className={th}>F<sub>z</sub></th>
              <th colSpan={2} className="font-normal pr-[12px]">Punto di applic.</th>
            </tr>
            <tr className="h-[35px]">
              <th className={`${th} border-b`}>[kN/m]</th>
              <th className={`${th} border-b`}>[kN/m]</th>
              <th className={`${th} border-b`}>x [m]</th>
              <th className="font-normal border-b border-[#c8c8c8] border-r">z [m]</th>
            </tr>
          </thead>
          <tbody>
            {forceRows.map((r, i) => (
              <tr key={r[0]} className={`h-[35px] ${i === 0 ? 'bg-[#efefef]' : ''}`}>
                <td className={`border-r border-b border-[#c8c8c8] text-center ${i === 0 ? 'bg-[#6e6e6e] text-[#e8e8e8]' : 'bg-[#f0f0f0]'}`}>{r[0]}</td>
                <td className="border-r border-b border-[#c8c8c8] pl-[4px]">{r[1]}</td>
                <td className={td}>{r[2]}</td>
                <td className={td}>{r[3]}</td>
                <td className={td}>{r[4]}</td>
                <td className={td}>{r[5]}</td>
              </tr>
            ))}
          </tbody>
        </table>
      </div>
      <Section label="Verifica parete - Armatura lato posteriore" bold className="mt-[11px]" />
      <div className="mt-[11px] grid grid-cols-[34px_331px_169px_70px_1fr] auto-rows-[33.4px] items-center">
        <span />
        <span className="font-bold whitespace-pre">TAGLIO  :</span>
        <span className="font-bold" style={{ color: '#148a1c' }}>SODDISFATTA</span>
        <span>(72,8%)</span>
        <span>Profondità = 5,00 m</span>
        <span />
        <span className="font-bold">FLESSIONE :</span>
        <span className="font-bold" style={{ color: '#148a1c' }}>SODDISFATTA</span>
        <span>(89,8%)</span>
        <span>Profondità = 5,00 m</span>
        <div className="w-[21px] h-[21px] ml-[3px] bg-white border border-[#888] flex items-center justify-center">
          <svg width="15" height="15" viewBox="0 0 15 15">
            <path d="M2 8L6 13L13 1" fill="none" stroke="#111" strokeWidth="3" />
          </svg>
        </div>
        <span className="font-bold whitespace-pre">PRINCIPI DI PROGETTAZIONE  :</span>
        <span className="font-bold" style={{ color: '#148a1c' }}>SODDISFATTA</span>
        <span>(45,4%)</span>
        <span />
      </div>
    </div>
  )
}

function BottomPanel() {
  return (
    <div className="h-[590px] flex bg-[#f0f0f0]">
      <div className="mt-[12px] ml-[5px] w-[29px] h-[572px] bg-[#d0d0d0] flex flex-col items-center justify-between py-[6px]">
        <span className="w-[3px] h-[10px] bg-[#111] mt-[6px] ml-[2px]" />
        <span className="[writing-mode:vertical-rl] rotate-180">Dimensionamento</span>
      </div>
      <div className="ml-[9px] w-[2175px] pt-[20px]">
        <div className="h-[49px] flex items-center justify-between">
          <div className="flex items-center">
            <span className="font-bold w-[185px]">Dimensionamento :</span>
            <div className={`w-[40px] h-[49px] ${btn} flex items-center justify-center`}>
              <PlusIcon />
            </div>
            <div className="w-[42px] h-[49px] ml-[9px] bg-[#cfcfcf] border border-[#c4c4c4] flex items-center justify-center">
              <MinusIcon gray />
            </div>
            <div className={`w-[44px] h-[49px] ml-[9px] ${selBtn} flex items-center justify-center`}>[1]</div>
          </div>
          <div className={`w-[159px] h-[49px] ${btn} flex items-center pl-[6px]`}>
            <svg width="26" height="30" viewBox="0 0 26 30">
              <path d="M2 5H15V28H2Z" fill="#fff" stroke="#222" strokeWidth="1.4" />
              <path d="M5 18H12M5 21H12M5 24H12" stroke="#222" />
              <circle cx="13" cy="8" r="7" fill="#2aa0a8" stroke="#222" strokeWidth="1.6" />
              <path d="M18 13L25 20" stroke="#222" strokeWidth="2.6" />
            </svg>
            <span className="ml-[5px]">Nel dettaglio</span>
          </div>
        </div>
        <div className="h-px bg-[#c8c8c8] mt-[8px]" />
        <div className="flex gap-[8px] h-[471px]">
          <LeftCol />
          <div className="w-[1585px]">
            <div className="h-[49px] pt-[8px] pl-[8px] flex items-end border-b border-[#808080]">
              {tabs.map((t, i) => (
                <div
                  key={t}
                  className={`${tabWidths[i]} flex items-center justify-center border-t border-r border-[#c0c0c0] whitespace-nowrap ${
                    i === 1 ? 'h-[42px] -mb-px bg-[#f0f0f0] border-l border-[#808080]' : 'h-[40px] bg-[#e4e4e4] border-l'
                  }`}
                >
                  {t}
                </div>
              ))}
            </div>
            <div className="flex gap-[8px]">
              <MidCol />
              <RightCol />
            </div>
          </div>
        </div>
        <div className="h-[27px] flex bg-[#c8c8c8]">
          <div className="w-[26px] bg-[#f0f0f0] border border-[#d4d4d4] flex items-center justify-center">
            <span className="w-0 h-0 border-y-[8px] border-y-transparent border-r-[9px] border-r-[#606060]" />
          </div>
          <div className="w-[64px] bg-[#f0f0f0] border-y border-[#d4d4d4]" />
          <div className="flex-1" />
          <div className="w-[133px] bg-[#f0f0f0] border-y border-[#d4d4d4]" />
          <div className="w-[27px] bg-[#f0f0f0] border border-[#d4d4d4] flex items-center justify-center">
            <span className="w-0 h-0 border-y-[8px] border-y-transparent border-l-[9px] border-l-[#606060]" />
          </div>
        </div>
      </div>
    </div>
  )
}

function LeftTools() {
  return (
    <div className="w-[99px] shrink-0 bg-[#f0f0f0] flex flex-col pl-[4px] pr-[2px] pt-[3px] pb-[2px]">
      <div className={`h-[74px] ${selBtn} flex items-center justify-center`}>
        <Icon2D />
      </div>
      <div className="mt-[14px] h-[44px] flex justify-center">
        <Icon3D />
      </div>
      <div className="mt-[19px] h-px bg-[#c8c8c8]" />
      <div className="mt-[17px] h-[48px] flex justify-center">
        <MoveIcon />
      </div>
      <div className={`mt-[12px] h-[73px] ${selBtn} flex items-center justify-center`}>
        <ZoomIcon />
      </div>
      <div className="mt-[4px] h-px bg-[#c8c8c8]" />
      <div className="mt-[20px] h-[39px] flex justify-center">
        <FitIcon />
      </div>
      <div className={`mt-auto h-[73px] ${selBtn} flex items-center justify-center`}>
        <TableIcon />
      </div>
      <div className={`mt-[6px] h-[73px] ${btn} flex items-center justify-center`}>
        <AbcIcon />
      </div>
      <div className={`mt-[6px] h-[74px] ${btn} flex items-center justify-center`}>
        <BigGear />
      </div>
    </div>
  )
}

const menus = ['File', 'Modifica', 'Inserisci', 'Analisi', 'Output', 'Impostazioni', 'Aiuto']

export default function App() {
  return (
    <div className="w-[2560px] h-[1925px] flex flex-col overflow-hidden bg-[#f0f0f0] border-t-2 border-x border-b border-[#6e6e6e] font-['Open_Sans',sans-serif] text-[18.4px] text-[#222]">
      {/* title bar */}
      <div className="h-[47px] shrink-0 bg-white flex items-center pl-[11px]">
        <svg width="26" height="26" viewBox="0 0 26 26">
          <rect x="0.7" y="0.7" width="24.6" height="24.6" rx="4" fill="#8cb060" stroke="#4d6b34" strokeWidth="1.4" />
          <path d="M11 4H14V18H21V21H6V18H9Z" fill="#f4f4f4" stroke="#33471f" />
        </svg>
        <span className="ml-[5px] whitespace-pre">GEO5 2020 - Muri a Mensola  [C:\Cantilever-Wall\screen-02.guz]</span>
        <div className="ml-auto flex items-center">
          <span className="w-[16px] h-[1.5px] bg-[#333] mr-[59px]" />
          <span className="w-[15px] h-[15px] border-[1.5px] border-[#333] mr-[59px]" />
          <svg width="17" height="17" viewBox="0 0 17 17" className="mr-[30px]">
            <path d="M1 1L16 16M16 1L1 16" stroke="#333" strokeWidth="1.5" />
          </svg>
        </div>
      </div>

      {/* menu */}
      <div className="h-[29px] shrink-0 bg-white flex items-center pl-[6px] gap-[13px]">
        {menus.map((m) => (
          <span key={m}>{m}</span>
        ))}
      </div>

      {/* toolbar */}
      <div className="relative h-[99px] shrink-0 bg-[#f0f0f0] border-b border-[#333] flex items-start pt-[6px] pl-[4px]">
        <VertTab label="File" w="w-[30px]" />
        <div className="ml-[20px] mt-[19px]"><NewIcon /></div>
        <div className="ml-[35px] mt-[19px]"><OpenIcon /></div>
        <Arrow className="ml-[20px] mt-[40px]" />
        <div className="ml-[20px] mt-[19px]"><SaveIcon /></div>
        <Arrow className="ml-[18px] mt-[40px]" />
        <div className="ml-[7px]"><VertTab label="Modifica" w="w-[30px]" /></div>
        <div className="ml-[13px] mt-[19px]"><CopyIcon /></div>
        <div className="ml-[25px] mt-[19px]"><PasteIcon /></div>
        <div className="ml-[13px]"><VertTab label="Fase" w="w-[29px]" /></div>
        <div className="ml-[9px] mt-[9px] flex flex-col gap-[22px]">
          <PlusIcon />
          <MinusIcon />
        </div>
        <div className={`ml-[17px] w-[56px] h-[87px] ${selBtn} flex items-center justify-center`}>[1]</div>
        <svg width="18" height="27" viewBox="0 0 18 27" className="absolute left-[1400px] top-[20px]">
          <path d="M1 1V21L6 16L10 25L13 24L9 15H16Z" fill="#fff" stroke="#555" strokeWidth="1.2" />
        </svg>
      </div>

      {/* body */}
      <div className="flex-1 flex min-h-0">
        <div className="w-[2232px] shrink-0 flex flex-col">
          <div className="h-[1120px] flex bg-white border-b border-[#444]">
            <LeftTools />
            <Drawing />
          </div>
          <BottomPanel />
        </div>
        <RightPanel />
      </div>

      {/* status bar */}
      <div className="relative h-[37px] shrink-0 border-t border-[#d0d0d0] bg-[#f0f0f0]">
        <svg width="12" height="12" viewBox="0 0 12 12" className="absolute right-[2px] bottom-[2px]">
          <path d="M10 2V3M7 5V6M10 5V6M4 8V9M7 8V9M10 8V9" stroke="#aaa" strokeWidth="2" />
        </svg>
      </div>
    </div>
  )
}
